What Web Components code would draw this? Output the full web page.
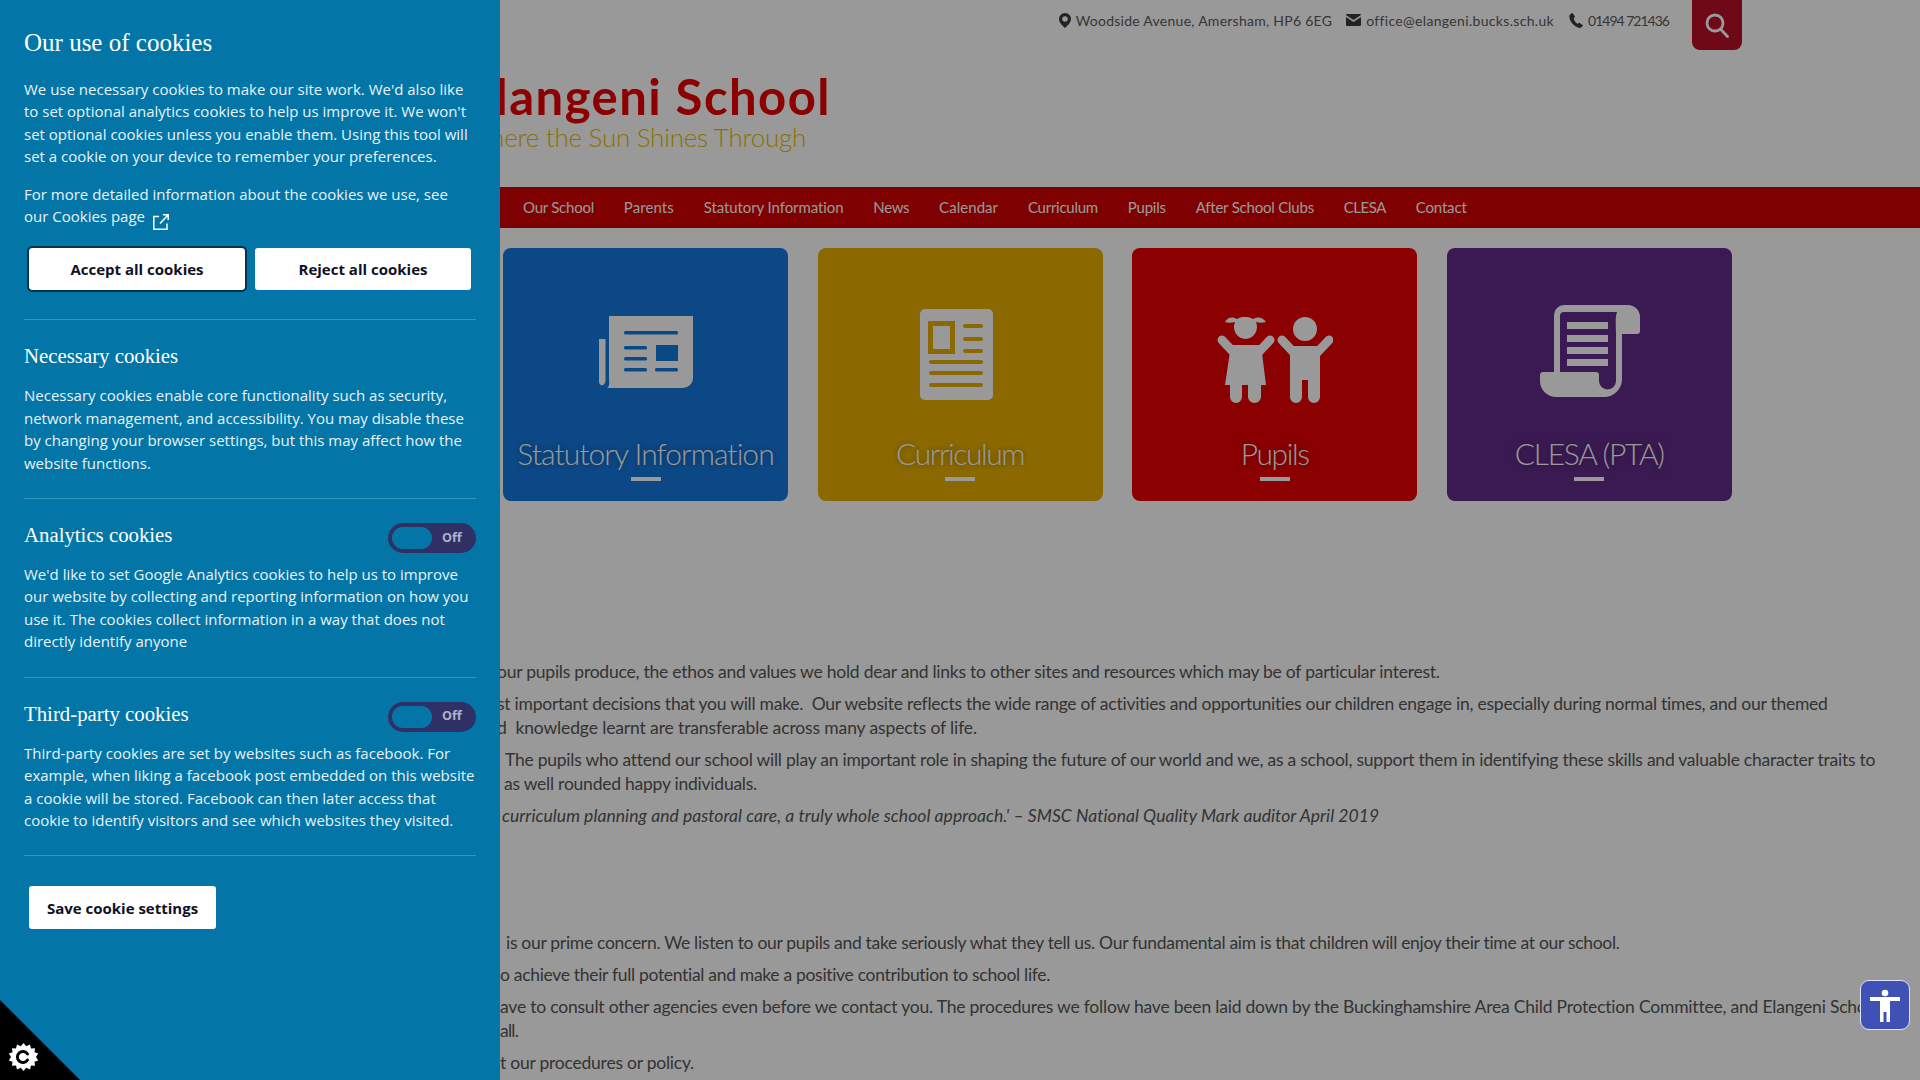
<!DOCTYPE html>
<html lang="en"><head><meta charset="utf-8"><title>Elangeni School</title>
<style>
html,body{margin:0;padding:0;height:100%;overflow:hidden;background:#fff}
body{font-family:Lato,"Open Sans",sans-serif;color:#4a4a4a}
</style></head>
<body>
<school-page>
  <school-topbar>
    <contact-item icon="pin" w="256.500">Woodside Avenue, Amersham, HP6 6EG</contact-item>
    <contact-item icon="mail" w="187">office@elangeni.bucks.sch.uk</contact-item>
    <contact-item icon="phone" w="81">01494 721436</contact-item>
  </school-topbar>
  <school-brand></school-brand>
  <school-nav>
    <fit-text w="71">Our School</fit-text><fit-text w="50">Parents</fit-text><fit-text w="140">Statutory Information</fit-text><fit-text w="36">News</fit-text><fit-text w="59">Calendar</fit-text><fit-text w="70">Curriculum</fit-text><fit-text w="38">Pupils</fit-text><fit-text w="118">After School Clubs</fit-text><fit-text w="42">CLESA</fit-text><fit-text w="51">Contact</fit-text>
  </school-nav>
  <tile-row>
    <school-tile bg="#1479e0" w="257" label="Statutory Information"><svg slot="icon" style="margin:68px 0 0 0" width="94" height="72" viewBox="0 0 94 72"><path fill="#fff" d="M10 0H94V62a10 10 0 0 1-10 10H8C11 70 10 67 10 62zM0 23H6.500V64C6.500 68 4 70 2 69S0 67 0 64z"/><g fill="#1479e0"><rect x="25" y="15" width="54" height="3.500" rx="1.500"/><rect x="25" y="30" width="23" height="3.500" rx="1.500"/><rect x="25" y="41" width="23" height="3.500" rx="1.500"/><rect x="25" y="52" width="23" height="3.500" rx="1.500"/><rect x="56" y="52" width="23" height="3.500" rx="1.500"/><rect x="57" y="29" width="22" height="16"/></g></svg></school-tile>
    <school-tile bg="#e8b000" w="128" label="Curriculum"><svg slot="icon" style="margin:61px 0 0 -7px" width="73" height="91" viewBox="0 0 73 91"><rect width="73" height="91" rx="5" fill="#fff"/><g fill="#e8b000"><path fill-rule="evenodd" d="M8 12H35V45H8zM13 17V40H30V17z"/><rect x="43" y="15" width="20" height="4" rx="2"/><rect x="43" y="28" width="20" height="4" rx="2"/><rect x="43" y="40" width="20" height="4" rx="2"/><rect x="9" y="51" width="54" height="4" rx="2"/><rect x="9" y="62" width="54" height="4" rx="2"/><rect x="9" y="74" width="54" height="4" rx="2"/></g></svg></school-tile>
    <school-tile bg="#e80000" w="68" label="Pupils"><svg slot="icon" style="margin:69px 0 0 0" width="116" height="86" viewBox="0 0 116 86"><g fill="#fff"><path d="M8 5C11-1 17 0 20 2c5-3 11-3 16 0 3-2 9-3 13 3-4 1-7 1-10 0a11.500 12 0 1 1-21 0C14 6 11 6 8 5z"/><path d="M14 28 H44 L49 68 H8z"/><path d="M13 66H25V80a6 6 0 0 1-12 0zM31 66H44V80a6.500 6 0 0 1-13 0z"/><ellipse cx="88" cy="12" rx="12" ry="12"/><path d="M73 29H103V80a6 6 0 0 1-12 0V63H85V80a6 6 0 0 1-12 0z"/></g><g stroke="#fff" stroke-width="9" stroke-linecap="round" fill="none"><path d="M5 23L20 39M53 23L38 39M65 23L80 39M112 23L97 39"/></g></svg></school-tile>
    <school-tile bg="#632c8a" w="149" label="CLESA (PTA)"><svg slot="icon" style="margin:57px 0 0 1px" width="100" height="92" viewBox="0 0 100 92"><path fill="#fff" fill-rule="evenodd" d="M24 0H88a12 12 0 0 1 12 12V26a3 3 0 0 1-3 3H82V74a18 18 0 0 1-18 18H16a16 16 0 0 1-16-16V70a3 3 0 0 1 3-3H14V10A10 10 0 0 1 24 0ZM24 7H77C75 12 76 20 76 29V76a8.500 8.500 0 0 1-17 0V70a3 3 0 0 0-3-3H20V11A4 4 0 0 1 24 7Z"/><g fill="#fff"><rect x="27" y="17" width="41" height="7"/><rect x="27" y="30" width="41" height="7"/><rect x="27" y="42" width="41" height="7"/><rect x="27" y="54" width="41" height="7"/></g></svg></school-tile>
  </tile-row>
  <school-copy>
    <copy-para top="159">
      <copy-line x="497" w="943">our pupils produce, the ethos and values we hold dear and links to other sites and resources which may be of particular interest.</copy-line>
    </copy-para>
    <copy-para>
      <copy-line x="497" w="1332">st important decisions that you will make.&nbsp; Our website reflects the wide range of activities and opportunities our children engage in, especially during normal times, and our themed</copy-line>
      <copy-line x="497" w="480">d&nbsp; knowledge learnt are transferable across many aspects of life.</copy-line>
    </copy-para>
    <copy-para>
      <copy-line x="505" w="1370">The pupils who attend our school will play an important role in shaping the future of our world and we, as a school, support them in identifying these skills and valuable character traits to</copy-line>
      <copy-line x="504" w="253">as well rounded happy individuals.</copy-line>
    </copy-para>
    <copy-para>
      <copy-line x="502" w="877" italic>curriculum planning and pastoral care, a truly whole school approach.' – SMSC National Quality Mark auditor April 2019</copy-line>
    </copy-para>
    <copy-para top="103">
      <copy-line x="506" w="1114">is our prime concern. We listen to our pupils and take seriously what they tell us. Our fundamental aim is that children will enjoy their time at our school.</copy-line>
    </copy-para>
    <copy-para>
      <copy-line x="500" w="551">o achieve their full potential and make a positive contribution to school life.</copy-line>
    </copy-para>
    <copy-para>
      <copy-line x="500" w="1380">ave to consult other agencies even before we contact you. The procedures we follow have been laid down by the Buckinghamshire Area Child Protection Committee, and Elangeni School</copy-line>
      <copy-line x="500" w="18">all.</copy-line>
    </copy-para>
    <copy-para>
      <copy-line x="500" w="194">t our procedures or policy.</copy-line>
    </copy-para>
  </school-copy>
</school-page>
<page-scrim></page-scrim>
<cookie-panel>
  <h2 slot="title">Our use of cookies</h2>
  <p>We use necessary cookies to make our site work. We'd also like to set optional analytics cookies to help us improve it. We won't set optional cookies unless you enable them. Using this tool will set a cookie on your device to remember your preferences.</p>
  <p>For more detailed information about the cookies we use, see our Cookies page <svg width="16" height="16" viewBox="0 0 16 16" style="vertical-align:-5px;margin-left:4px;position:relative;top:3px" fill="none" stroke="#fff" stroke-width="1.500"><path d="M6 2.500H.8V15.200H14V9.500M7 9.500L15 1M10 .8H15.200V6"/></svg></p>
  <cookie-actions slot="actions">
    <cookie-button focused>Accept all cookies</cookie-button>
    <cookie-button>Reject all cookies</cookie-button>
  </cookie-actions>
  <cookie-section slot="sections" heading="Necessary cookies">Necessary cookies enable core functionality such as security, network management, and accessibility. You may disable these by changing your browser settings, but this may affect how the website functions.</cookie-section>
  <cookie-section slot="sections" heading="Analytics cookies" toggle>We'd like to set Google Analytics cookies to help us to improve our website by collecting and reporting information on how you use it. The cookies collect information in a way that does not directly identify anyone</cookie-section>
  <cookie-section slot="sections" heading="Third-party cookies" toggle>Third-party cookies are set by websites such as facebook. For example, when liking a facebook post embedded on this website a cookie will be stored. Facebook can then later access that cookie to identify visitors and see which websites they visited.</cookie-section>
  <cookie-button slot="save" wide>Save cookie settings</cookie-button>
</cookie-panel>
<cookie-corner></cookie-corner>
<access-button></access-button>
<script>
const el=(name,css,html,extra)=>{customElements.define(name,class extends HTMLElement{
  connectedCallback(){ if(this.shadowRoot) return; const r=this.attachShadow({mode:'open'}); r.innerHTML='<style>'+css+'</style>'+(typeof html==='function'?html(this):html); if(extra) extra(this,r);}
});};
el('school-page',':host{display:block;width:1920px;height:1080px;overflow:hidden;background:#fff}','<slot></slot>');
el('page-scrim',':host{position:fixed;inset:0;background:rgba(0,0,0,.4);display:block}','');
el('school-topbar',':host{display:flex;justify-content:flex-end;align-items:flex-start;gap:14px;height:50px;padding-right:178px;box-sizing:border-box} .s{width:50px;height:50px;margin-left:9px;background:#b91028;border-radius:0 0 8px 8px;display:flex;align-items:center;justify-content:center}',
 '<slot></slot><div class="s"><svg width="24" height="25" viewBox="0 0 24 25" fill="none" stroke="#fff" stroke-width="2.800"><circle cx="10" cy="10" r="8"/><path d="M15.500 16L22.500 23.500" stroke-linecap="round"/></svg></div>');
const icons={
 pin:'<svg width="12" height="15" viewBox="0 0 12 15"><path fill-rule="evenodd" fill="#3a3a3a" d="M6 0a6 6 0 0 1 6 6C12 10 8 13 6 15 4 13 0 10 0 6a6 6 0 0 1 6-6zM6 3.200a2.800 2.800 0 1 0 0 5.600 2.800 2.800 0 0 0 0-5.600z"/></svg>',
 mail:'<svg width="15" height="12" viewBox="0 0 15 12"><path fill="#3a3a3a" d="M1 0H14a1 1 0 0 1 1 1L7.500 6 0 1a1 1 0 0 1 1-1zM0 3L7.500 8 15 3V11a1 1 0 0 1-1 1H1a1 1 0 0 1-1-1z"/></svg>',
 phone:'<svg width="15" height="15" viewBox="-1 0 15 15"><path fill="#3a3a3a" d="M3.500 0L6 3.500 4.700 5.500C5 7.500 6.500 9.800 8.500 10.800L10.500 9.800 14 12.500C13 14.500 11.500 15.200 9.800 14.800 4.500 13.500 0 7.500.4 3.300.6 1.500 1.700.5 3.500 0z"/></svg>'};
el('contact-item',':host{display:flex;align-items:center;gap:5px;height:40px;font-size:14px;font-weight:400;color:#5a5a5a;white-space:nowrap}',
 h=>(icons[h.getAttribute('icon')]||'')+'<fit-text w="'+h.getAttribute('w')+'"><slot></slot></fit-text>');
el('school-brand',':host{display:flex;flex-direction:column;align-items:flex-end;width:831px;height:137px;box-sizing:border-box;white-space:nowrap} .t{font:700 49px/48px Lato,sans-serif;color:#e80000;margin-top:22px} .g{font:300 26px/32px Lato,sans-serif;color:#e8bc00;margin:1px 25px 0 0}',
 '<div class="t"><fit-text w="365">Elangeni School</fit-text></div><div class="g"><fit-text w="342">Where the Sun Shines Through</fit-text></div>');
el('school-nav',':host{display:flex;align-items:center;gap:29.850px;height:41px;padding-left:523px;background:#d40000;color:#fff;font-size:15px;font-weight:400;white-space:nowrap;line-height:39px;box-sizing:border-box}','<slot></slot>');
el('tile-row',':host{display:flex;gap:29.600px;padding:20px 0 0 503px}','<slot></slot>');
el('school-tile',':host{display:block;width:285px;height:253px;border-radius:8px;color:#fff;position:relative} .i{display:flex;justify-content:center;height:189px} .l{font:300 30px/36px Lato,sans-serif;text-align:center;white-space:nowrap;text-shadow:0 0 6px rgba(0,0,0,.45);margin-top:-2px} .b{width:30px;height:4px;background:#fff;margin:6px auto 0}',
 h=>'<div class="i"><slot name="icon"></slot></div><div class="l"><fit-text w="'+h.getAttribute('w')+'">'+h.getAttribute('label')+'</fit-text></div><div class="b"></div>',
 (h)=>{h.style.background=h.getAttribute('bg');});
el('school-copy',':host{display:block;color:#555;font-size:17.500px;font-weight:400;line-height:24px}','<slot></slot>');
el('copy-para',':host{display:block;margin-top:8px}','<slot></slot>',h=>{if(h.hasAttribute('top'))h.style.marginTop=h.getAttribute('top')+'px';});
el('copy-line',':host{display:block;white-space:nowrap}',h=>'<fit-text w="'+h.getAttribute('w')+'"'+(h.hasAttribute('italic')?' style="font-style:italic"':'')+'><slot></slot></fit-text>',h=>{h.style.paddingLeft=h.getAttribute('x')+'px';});
el('cookie-panel',':host{position:fixed;left:0;top:0;bottom:0;width:500px;box-sizing:border-box;padding:0 24px;background:#0376a7;color:#e8f2f7;font:15px/22.400px "Open Sans",sans-serif;overflow:hidden;display:block} ::slotted(h2){font:400 25px/36px "Liberation Serif",serif;color:#fff;margin:25px 0 17px} ::slotted(p){margin:0 0 15px}  .x{margin-top:21px}.s{margin-top:29px;border-top:1px solid #3a95bc} .v{margin:30px 0 0 5px}',
 '<slot name="title"></slot><slot></slot><div class="x"><slot name="actions"></slot></div><div class="s"><slot name="sections"></slot></div><div class="v"><slot name="save"></slot></div>');
el('cookie-actions',':host{display:flex;gap:10px;padding-left:5px}','<slot></slot>');
el('cookie-button',':host{display:inline-flex;align-items:center;justify-content:center;box-sizing:border-box;width:216px;height:42px;background:#fff;color:#111125;font:700 15px/20px "Open Sans",sans-serif;border-radius:3px} :host([focused]){outline:2px solid #06344c;outline-offset:0} :host([wide]){width:187px;height:43px}','<slot></slot>');
el('cookie-section',':host{display:block;padding:22px 0 24px;border-bottom:1px solid #3a95bc} .h{display:flex;justify-content:space-between;height:28px;margin-bottom:14px} h3{font:400 20.800px/28px "Liberation Serif",serif;color:#fff;margin:0}',
 h=>'<div class="h"><h3>'+h.getAttribute('heading')+'</h3>'+(h.hasAttribute('toggle')?'<cookie-toggle></cookie-toggle>':'')+'</div><slot></slot>');
el('cookie-toggle',':host{display:flex;align-items:center;box-sizing:border-box;width:88px;height:30px;margin-top:2px;padding:0 4px;border-radius:15px;background:#2f3166} i{display:block;width:40px;height:22px;border-radius:11px;background:#0376a7} b{font:700 12.500px/1 "Open Sans",sans-serif;color:#b0b2ca;margin-left:10px}','<i></i><b>Off</b>');
el('cookie-corner',':host{position:fixed;left:0;bottom:0;width:80px;height:80px;display:block}',
 '<svg width="80" height="80" viewBox="0 0 80 80"><path d="M0 0L80 80H0z" fill="#000"/><polygon fill="#fff" points="23.500,44.500 26.200,47.800 30,46 31,50 35,49.700 34.500,53.700 38.200,55 36,58.500 38.200,62 34.500,63.300 35,67.300 31,67 30,71 26.200,69.200 23.500,72.500 20.800,69.200 17,71 16,67 12,67.300 12.500,63.300 8.800,62 11,58.500 8.800,55 12.500,53.700 12,49.700 16,50 17,46 20.800,47.800" transform="translate(0 -1.500)"/><path d="M28 54.500a5.500 5.500 0 1 0 0 6" fill="none" stroke="#000" stroke-width="3" stroke-linecap="round" transform="translate(-.5 -.5)"/></svg>');
el('access-button',':host{position:fixed;left:1860px;top:980px;width:50px;height:50px;box-sizing:border-box;border:1px solid #dfe3f5;border-radius:9px;background:#3f51b5;display:flex;align-items:center;justify-content:center}',
 '<svg width="32" height="36" viewBox="0 0 32 36" fill="#fff"><circle cx="16" cy="6" r="3.300"/><path d="M1 10H31V14H21V35H17.500V25H14.500V35H11V14H1z"/></svg>');
customElements.define('fit-text',class extends HTMLElement{
  connectedCallback(){ if(!this.shadowRoot){this.attachShadow({mode:'open'}).innerHTML='<style>:host{display:inline-block;white-space:nowrap}</style><slot></slot>';}
    const w=parseFloat(this.getAttribute('w')); const s=this.querySelector('slot'); const txt=(s?s.assignedNodes({flatten:true}).map(n=>n.textContent).join('').length:this.textContent.length)||1;
    this.style.letterSpacing='0px'; const m=this.getBoundingClientRect().width; if(m>0&&w) this.style.letterSpacing=((w-m)/txt).toFixed(3)+'px';
  }
});
</script>
</body></html>
